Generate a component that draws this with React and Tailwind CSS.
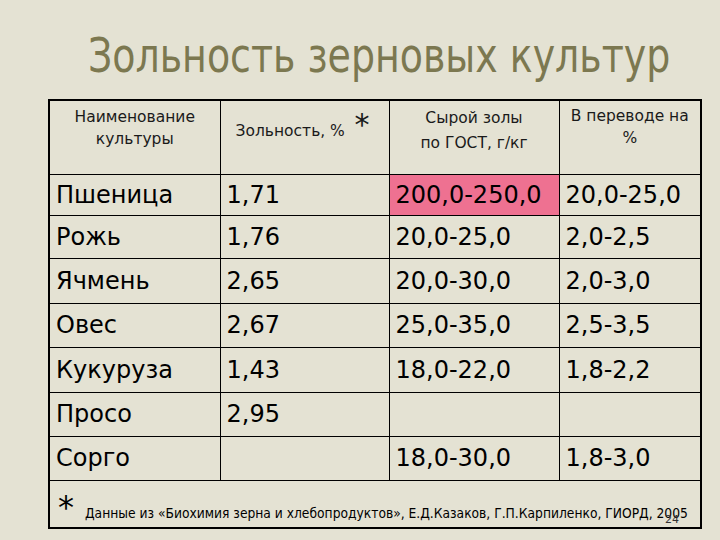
import React from 'react';

const rows = [
  { name: 'Пшеница', ash: '1,71', raw: '200,0-250,0', pct: '20,0-25,0', hot: true, h: 'h-[41px]' },
  { name: 'Рожь', ash: '1,76', raw: '20,0-25,0', pct: '2,0-2,5', h: 'h-[43px]' },
  { name: 'Ячмень', ash: '2,65', raw: '20,0-30,0', pct: '2,0-3,0', h: 'h-[45px]' },
  { name: 'Овес', ash: '2,67', raw: '25,0-35,0', pct: '2,5-3,5', h: 'h-[44px]' },
  { name: 'Кукуруза', ash: '1,43', raw: '18,0-22,0', pct: '1,8-2,2', h: 'h-[45px]' },
  { name: 'Просо', ash: '2,95', raw: '', pct: '', h: 'h-[44px]' },
  { name: 'Сорго', ash: '', raw: '18,0-30,0', pct: '1,8-3,0', h: 'h-[44px]' },
];

export default function App() {
  return (
    <div className="relative w-[720px] h-[540px] overflow-hidden bg-[#e4e2d3] font-['DejaVu_Sans',sans-serif] text-black">
      {/* Заголовок */}
      <div className="pl-[88px] pt-[27px] h-[99px]">
        <h1 className="origin-left [transform:scaleX(0.79)] whitespace-nowrap text-[48px] leading-[56px] text-[#7c7850]">
          Зольность зерновых культур
        </h1>
      </div>

      {/* Таблица */}
      <table className="ml-[48px] w-[652px] border-collapse border-[2px] border-black table-fixed">
        <colgroup>
          <col className="w-[171px]" />
          <col className="w-[169px]" />
          <col className="w-[170px]" />
          <col className="w-[142px]" />
        </colgroup>
        <thead>
          <tr className="h-[74px] text-[15.5px] text-[#1a1a1a]">
            <th className="border border-black font-normal align-top pt-[5px] leading-[22px]">
              Наименование<br />культуры
            </th>
            <th className="relative border border-black font-normal align-top text-left pl-[15px] pt-[19px] leading-[22px]">
              Зольность, %
              <span className="absolute left-[134px] top-[9px] text-[30px] leading-none">*</span>
            </th>
            <th className="border border-black font-normal align-top pt-[5px] leading-[25px]">
              Сырой золы<br />по ГОСТ, г/кг
            </th>
            <th className="border border-black font-normal align-top pt-[4px] leading-[22px]">
              В переводе на<br />%
            </th>
          </tr>
        </thead>
        <tbody className="text-[24px] leading-[28px]">
          {rows.map((r) => (
            <tr key={r.name} className={r.h}>
              <td className="border border-black pl-[6px]">{r.name}</td>
              <td className="border border-black pl-[6px]">{r.ash}</td>
              <td className={`border border-black pl-[6px] ${r.hot ? 'bg-[#ee7191]' : ''}`}>{r.raw}</td>
              <td className="border border-black pl-[6px]">{r.pct}</td>
            </tr>
          ))}
          <tr className="h-[48px]">
            <td colSpan={4} className="border border-black">
              <div className="flex items-start pl-[8px]">
                <span className="text-[32px] leading-[30px] pt-[6px]">*</span>
                <span className="pl-[11px] pt-[19px] text-[13.7px] leading-[16px] whitespace-nowrap font-['DejaVu_Sans_Condensed','DejaVu_Sans',sans-serif]">
                  Данные из «Биохимия зерна и хлебопродуктов», Е.Д.Казаков, Г.П.Карпиленко, ГИОРД, 2005
                </span>
              </div>
            </td>
          </tr>
        </tbody>
      </table>

      {/* Номер слайда */}
      <span className="absolute left-[665px] top-[513px] text-[11px] leading-[14px] text-[#333]">24</span>
    </div>
  );
}
